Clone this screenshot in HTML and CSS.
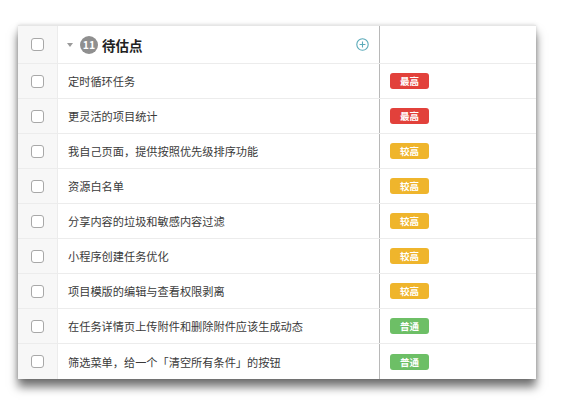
FILE: index.html
```html
<!DOCTYPE html>
<html lang="zh">
<head>
<meta charset="utf-8">
<link rel="stylesheet" href="styles.css">
</head>
<body>
<div class="card">
  <div class="row head">
    <div class="cb"><span class="box"></span></div>
    <div class="title">
      <span class="caret"></span>
      <span class="count">11</span>
      <span class="name">待估点</span>
      <svg class="plus" width="13" height="13" viewBox="0 0 13 13"><circle cx="6.5" cy="6.5" r="5.7" fill="none" stroke="#5aaab9" stroke-width="1.1"/><path d="M6.5 3.6v5.8M3.6 6.5h5.8" stroke="#5aaab9" stroke-width="1.1"/></svg>
    </div>
    <div class="pri"></div>
  </div>
  <div class="row"><div class="cb"><span class="box"></span></div><div class="title">定时循环任务</div><div class="pri"><span class="tag red">最高</span></div></div>
  <div class="row"><div class="cb"><span class="box"></span></div><div class="title">更灵活的项目统计</div><div class="pri"><span class="tag red">最高</span></div></div>
  <div class="row"><div class="cb"><span class="box"></span></div><div class="title">我自己页面，提供按照优先级排序功能</div><div class="pri"><span class="tag yellow">较高</span></div></div>
  <div class="row"><div class="cb"><span class="box"></span></div><div class="title">资源白名单</div><div class="pri"><span class="tag yellow">较高</span></div></div>
  <div class="row"><div class="cb"><span class="box"></span></div><div class="title">分享内容的垃圾和敏感内容过滤</div><div class="pri"><span class="tag yellow">较高</span></div></div>
  <div class="row"><div class="cb"><span class="box"></span></div><div class="title">小程序创建任务优化</div><div class="pri"><span class="tag yellow">较高</span></div></div>
  <div class="row"><div class="cb"><span class="box"></span></div><div class="title">项目模版的编辑与查看权限剥离</div><div class="pri"><span class="tag yellow">较高</span></div></div>
  <div class="row"><div class="cb"><span class="box"></span></div><div class="title">在任务详情页上传附件和删除附件应该生成动态</div><div class="pri"><span class="tag green">普通</span></div></div>
  <div class="row last"><div class="cb"><span class="box"></span></div><div class="title">筛选菜单，给一个「清空所有条件」的按钮</div><div class="pri"><span class="tag green">普通</span></div></div>
</div>
</body>
</html>
```
FILE: styles.css
```css
html, body {
  margin: 0;
  padding: 0;
  background: #ffffff;
}
body {
  padding: 25px 0 30px 18px;
  font-family: "Noto Sans CJK SC", "Noto Sans", sans-serif;
  color: #333333;
}
.card {
  width: 518px;
  background: #ffffff;
  box-shadow: 0 8px 9px rgba(0, 0, 0, 0.55), 0 0 4px rgba(0, 0, 0, 0.16);
  display: flex;
  flex-direction: column;
  border-top: 1px solid #e6e6e6;
}
.row {
  display: flex;
  height: 35px;
  border-bottom: 1px solid #ececec;
  box-sizing: border-box;
}
.row.head {
  height: 38px;
}
.row.last {
  border-bottom: none;
}
.cb {
  width: 40px;
  flex: none;
  background: #f7f7f7;
  border-right: 1px solid #ececec;
  box-sizing: border-box;
  display: flex;
  align-items: center;
  justify-content: center;
}
.box {
  width: 13px;
  height: 13px;
  box-sizing: border-box;
  border: 1px solid #a8a8a8;
  border-radius: 3px;
  background: #ffffff;
}
.title {
  width: 322px;
  flex: none;
  box-sizing: border-box;
  border-right: 1px solid #b8b8b8;
  display: flex;
  align-items: center;
  padding-left: 10px;
  font-size: 11.2px;
  color: #3a3a3a;
}
.head .title {
  padding-left: 9px;
  padding-right: 10px;
}
.caret {
  width: 0;
  height: 0;
  border-left: 3.5px solid transparent;
  border-right: 3.5px solid transparent;
  border-top: 4px solid #9a9a9a;
  margin-right: 7px;
}
.count {
  width: 18px;
  height: 18px;
  border-radius: 50%;
  background: #8f8f8f;
  color: #ffffff;
  font-size: 10.5px;
  font-weight: bold;
  display: flex;
  align-items: center;
  justify-content: center;
  margin-right: 4px;
}
.name {
  font-size: 13.5px;
  font-weight: bold;
  color: #222222;
  flex: 1;
}
.plus {
  display: block;
}
.pri {
  flex: 1;
  display: flex;
  align-items: center;
  padding-left: 10px;
}
.tag {
  width: 39px;
  height: 16px;
  border-radius: 3px;
  color: #ffffff;
  font-size: 9.5px;
  font-weight: bold;
  display: flex;
  align-items: center;
  justify-content: center;
}
.red { background: #e2413b; }
.yellow { background: #efb52c; }
.green { background: #6dbf66; }
```
